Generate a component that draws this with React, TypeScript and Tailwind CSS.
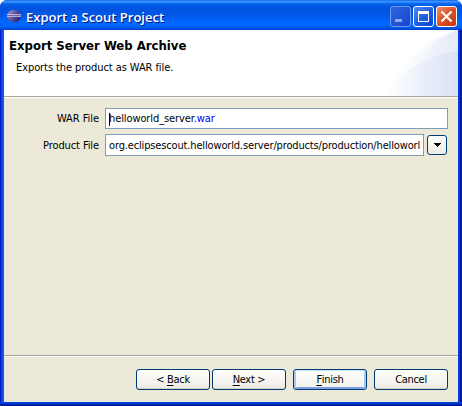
import type { ReactNode } from "react";

const TEXT = "font-['DejaVu_Sans_Condensed','DejaVu_Sans',sans-serif] [font-stretch:condensed]";

function EclipseIcon() {
  return (
    <svg width="16" height="16" viewBox="0 0 16 16" className="shrink-0">
      <defs>
        <linearGradient id="orb" x1="0" y1="0" x2="1" y2="0.6">
          <stop offset="0" stopColor="#b6a6cc" />
          <stop offset="0.45" stopColor="#6960a8" />
          <stop offset="1" stopColor="#29236f" />
        </linearGradient>
      </defs>
      <ellipse cx="8" cy="7" rx="6.9" ry="6.3" fill="url(#orb)" />
      <path d="M1 5.5h14M1 7.5h14" stroke="#c9c8ea" strokeWidth="0.8" />
      <path d="M1 6.5h14" stroke="#7065a9" strokeWidth="1" />
    </svg>
  );
}

function Swoosh() {
  return (
    <svg width="74" height="66" viewBox="0 0 74 66" className="block">
      <defs>
        <linearGradient id="outer" x1="0" x2="1">
          <stop offset="0" stopColor="#ffffff" />
          <stop offset="1" stopColor="#f0f4fb" />
        </linearGradient>
        <linearGradient id="middle" x1="0" x2="1">
          <stop offset="0" stopColor="#f5f7fc" />
          <stop offset="1" stopColor="#e4eaf7" />
        </linearGradient>
        <linearGradient id="inner" x1="0" x2="1">
          <stop offset="0" stopColor="#ffffff" />
          <stop offset="0.5" stopColor="#ebf0fa" />
          <stop offset="1" stopColor="#d9e2f5" />
        </linearGradient>
      </defs>
      <path d="M2 66C12 36 38 10 74 0V66Z" fill="url(#outer)" />
      <path d="M35 37C44 17 57 5 74 0V30Z" fill="url(#middle)" />
      <path d="M2 66C10 49 38 24 74 21V66Z" fill="url(#inner)" />
    </svg>
  );
}

function CaptionButton({ tone, children }: { tone: string; children: ReactNode }) {
  return (
    <div className={`flex h-[21px] w-[21px] items-center justify-center rounded-[3px] border ${tone}`}>
      <svg width="19" height="19" viewBox="0 0 19 19" fill="none">{children}</svg>
    </div>
  );
}

function PushButton({ children, primary, className = "" }: { children: ReactNode; primary?: boolean; className?: string }) {
  return (
    <button
      className={`flex h-[21px] w-[74px] items-center justify-center rounded-[3px] border border-[#003c74] pt-px text-[11px] leading-[14px] tracking-[-0.3px] whitespace-pre ${
        primary
          ? "bg-linear-to-b from-white to-[#f0f0ea] shadow-[inset_0_1px_0_#cee7ff,inset_2px_0_0_#a9c4f5,inset_-2px_0_0_#a9c4f5,inset_0_-2px_0_#7d9fe0]"
          : "bg-linear-to-b from-white via-[#f6f5f1] to-[#ecebe5] shadow-[inset_0_-1px_0_#d8d2c5]"
      } ${className}`}
    >
      {children}
    </button>
  );
}

function Mnemonic({ children }: { children: ReactNode }) {
  return <span className="underline decoration-1 underline-offset-[2px]">{children}</span>;
}

export default function App() {
  return (
    <div className={`flex h-[406px] w-[462px] flex-col overflow-hidden bg-white text-[11px] leading-[14px] text-black ${TEXT}`}>
      <div className="flex h-full flex-col rounded-t-[7px] bg-[linear-gradient(90deg,#0019cf_0,#0019cf_1px,#0144e0_1px,#0855dd_3px,#166aee_4px,#003be0_458px,#0038e0_460px,#0016a4_460px)]">
        <header className="flex h-[30px] shrink-0 items-center rounded-t-[7px] bg-[linear-gradient(180deg,#0058e6_0,#3a93ff_1px,#3a93ff_2px,#1474f6_3px,#0563ea_4px,#0054df_7px,#0054df_11px,#005cf0_18px,#0067ff_22px,#0066fd_26px,#0054e0_28px,#003dd7_30px)] pt-[3px] pr-[5px] pl-[6px]">
          <EclipseIcon />
          <h1 className="ml-[4px] grow text-[13px] leading-[16px] font-semibold whitespace-nowrap text-white [font-stretch:normal] [text-shadow:1px_1px_0_#00137e] font-['Open_Sans','Noto_Sans',sans-serif]">
            Export a Scout Project
          </h1>
          <div className="flex gap-[2px]">
            <CaptionButton tone="border-[#6f9bec] bg-linear-to-br from-[#3065dd] to-[#1744ce]">
              <path d="M4 13.5h7" stroke="#8ea7ed" strokeWidth="3" />
            </CaptionButton>
            <CaptionButton tone="border-white bg-linear-to-br from-[#5387ee] via-[#2360df] to-[#0543d3]">
              <path d="M4.5 5v9.5h10V5" stroke="white" />
              <path d="M4 5.5h11" stroke="white" strokeWidth="3" />
            </CaptionButton>
            <CaptionButton tone="border-white bg-linear-to-br from-[#ed8b6c] via-[#dc5127] to-[#c93006]">
              <path d="M4.5 4.5l10 10M14.5 4.5l-10 10" stroke="white" strokeWidth="2.2" />
            </CaptionButton>
          </div>
        </header>

        <main className="mr-[4px] ml-[4px] flex h-[372px] flex-col bg-[#ece9d8]">
          <section className="flex h-[66px] shrink-0 justify-between bg-white">
            <div className="pt-[8px] pl-[5px] whitespace-nowrap">
              <h2 className="text-[13px] leading-[16px] font-bold">Export Server Web Archive</h2>
              <p className="mt-[7px] pl-[7px] tracking-[-0.08px]">Exports the product as WAR file.</p>
            </div>
            <Swoosh />
          </section>
          <div className="h-[2px] shrink-0 border-t border-[#aca899] bg-white" />

          <form className="flex grow flex-col gap-[5px] pt-[10px] pl-[6px]">
            <div className="flex h-[21px] items-center">
              <label className="w-[90px] pt-px pr-[1px] text-right tracking-[-0.05px]">WAR File</label>
              <div className="ml-[5px] flex h-[21px] w-[343px] items-center border border-[#7f9db9] bg-white pt-px pl-[3px] whitespace-nowrap">
                <span className="mr-[-1px] h-[13px] w-px bg-black" />
                <span className="tracking-[-0.1px]">helloworld_server<span className="text-[#0000ff]">.war</span></span>
              </div>
            </div>
            <div className="flex h-[22px] items-center">
              <label className="w-[90px] pt-px pr-[1px] text-right tracking-[-0.1px]">Product File</label>
              <div className="ml-[5px] flex h-[22px] w-[319px] items-center border border-[#7f9db9] bg-white pt-px pl-[3px]">
                <span className="tracking-[-0.15px] whitespace-nowrap">org.eclipsescout.helloworld.server/products/production/helloworl</span>
              </div>
              <button type="button" className="ml-[3px] flex h-[20px] w-[20px] items-center justify-center rounded-[3px] border border-[#003c74] bg-linear-to-b from-white to-[#ecebe5]">
                <svg width="7" height="4" viewBox="0 0 7 4"><path d="M0 0h7v1H6v1H5v1H4v1H3V3H2V2H1V1H0Z" fill="black" /></svg>
              </button>
            </div>
          </form>

          <footer className="flex h-[47px] shrink-0 border-t border-[#aca899] pt-[13px] pl-[132px] shadow-[inset_0_1px_0_white]">
            <PushButton>{"< "}<Mnemonic>B</Mnemonic>ack</PushButton>
            <PushButton className="ml-[2px]"><Mnemonic>N</Mnemonic>{"ext >"}</PushButton>
            <PushButton primary className="ml-[7px]"><Mnemonic>F</Mnemonic>inish</PushButton>
            <PushButton className="ml-[7px]">Cancel</PushButton>
          </footer>
        </main>
        <div className="h-[4px] shrink-0 bg-[linear-gradient(180deg,#0441d8_0,#0441d8_1px,#0030c8_2px,#001da0_3px,#00138c_4px)]" />
      </div>
    </div>
  );
}
